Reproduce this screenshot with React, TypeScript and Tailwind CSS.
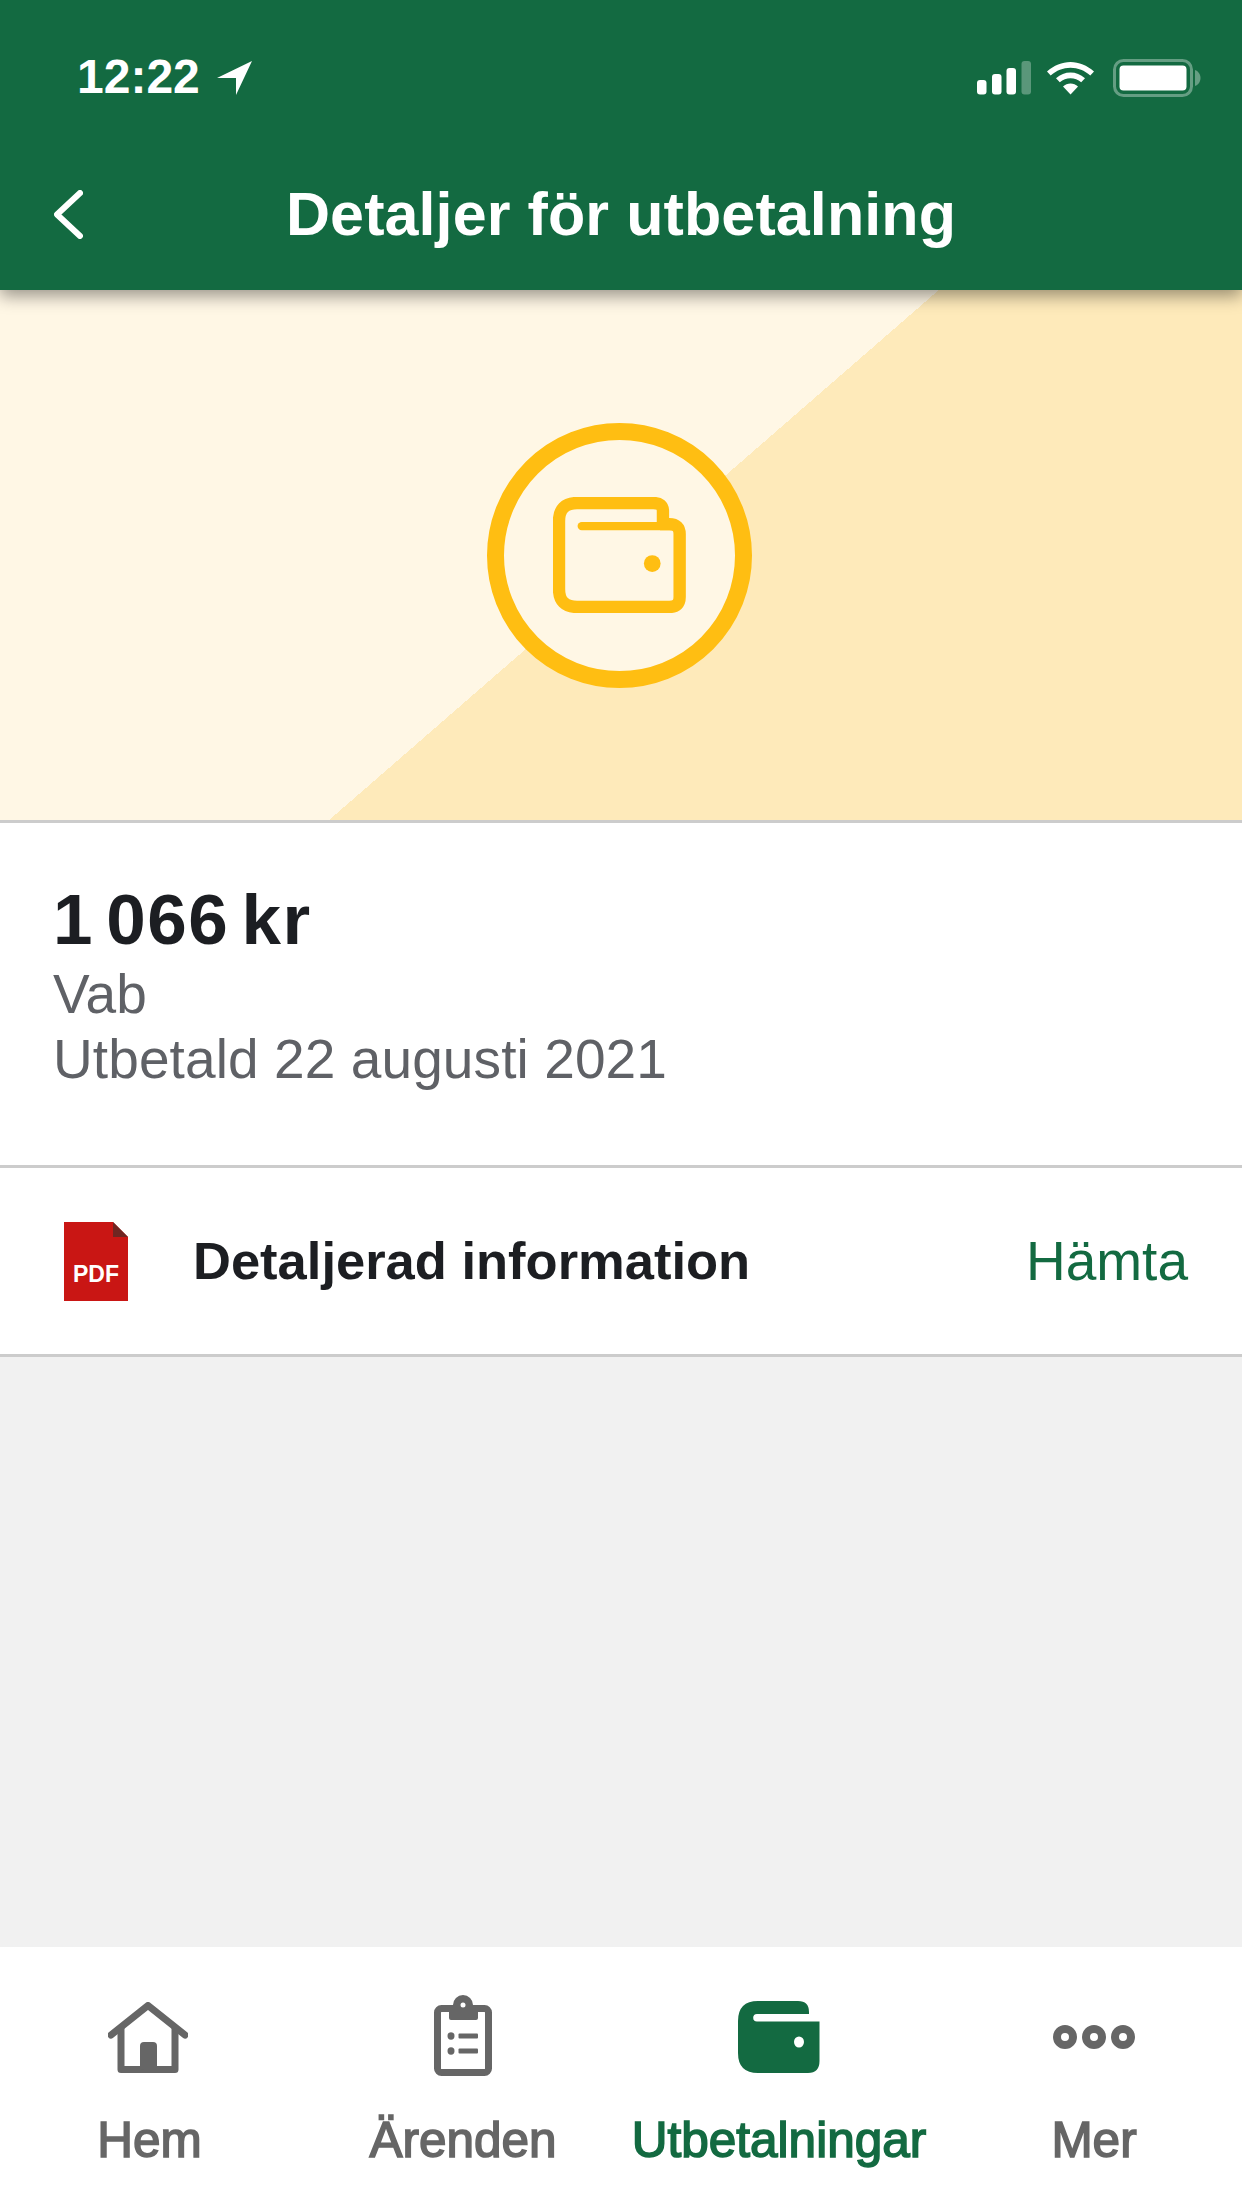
import React from 'react';

const tabs = [
  { label: 'Hem', active: false },
  { label: 'Ärenden', active: false },
  { label: 'Utbetalningar', active: true },
  { label: 'Mer', active: false },
];

function StatusIcons() {
  return (
    <div className="flex items-center">
      <svg width="54" height="34" viewBox="0 0 54 34" fill="#fff" className="mr-[16px]">
        <rect x="0" y="19" width="9.5" height="14.5" rx="3" />
        <rect x="15" y="13" width="9.5" height="20.5" rx="3" />
        <rect x="29.5" y="7" width="9.5" height="26.5" rx="3" />
        <rect x="44.5" y="0" width="9.5" height="33.5" rx="3" fillOpacity="0.3" />
      </svg>
      <svg width="47" height="34" viewBox="0 0 47 34" fill="#fff">
        <path d="M23.5 1C32 1 40 4.4 47 10.5L43.3 14.5C37.5 9.6 31 6.8 23.5 6.8S9.5 9.6 3.7 14.5L0 10.5C7 4.4 15 1 23.5 1Z" />
        <path d="M23.5 11.5C28.8 11.5 33.6 13.5 38 17.2L34.2 21.2C31 18.6 27.5 17.2 23.5 17.2S16 18.6 12.8 21.2L9 17.2C13.4 13.5 18.2 11.5 23.5 11.5Z" />
        <path d="M23.5 22.5C26.3 22.5 28.8 23.5 31 25.4L23.5 33.5L16 25.4C18.2 23.5 20.7 22.5 23.5 22.5Z" />
      </svg>
      <svg width="88" height="38" viewBox="0 0 88 38" className="ml-[19px]">
        <rect x="1.5" y="1.5" width="77" height="35" rx="9" fill="none" stroke="#fff" strokeOpacity="0.35" strokeWidth="3" />
        <rect x="6.5" y="6.5" width="67" height="25" rx="4" fill="#fff" />
        <path d="M82 11C85 12 87.5 15 87.5 19S85 26 82 27Z" fill="#fff" fillOpacity="0.35" />
      </svg>
    </div>
  );
}

function TabIcon({ name }: { name: string }) {
  if (name === 'Hem') {
    return (
      <svg width="80" height="71" viewBox="0 0 80 71" fill="none" stroke="#666" strokeWidth="7" strokeLinejoin="round" strokeLinecap="round" className="-ml-[3px]">
        <path d="M3 33L40 3.5L77 33" />
        <path d="M13 25V67.5H67V25" strokeLinecap="butt" />
        <rect x="32" y="40" width="17" height="28" rx="4" fill="#666" stroke="none" />
      </svg>
    );
  }
  if (name === 'Ärenden') {
    return (
      <svg width="58" height="81" viewBox="0 0 58 81" className="-mt-[4px]">
        <rect x="3.5" y="13.5" width="51" height="64" rx="4" fill="none" stroke="#666" strokeWidth="7" />
        <path d="M15 10H19A10 10 0 0 1 39 10H44V23Q44 25 42 25H17Q15 25 15 23Z" fill="#666" />
        <circle cx="29" cy="10" r="2.5" fill="#fff" />
        <ellipse cx="17" cy="41" rx="3.5" ry="3.7" fill="#666" />
        <rect x="24.5" y="38.5" width="19.5" height="5" rx="1" fill="#666" />
        <ellipse cx="17" cy="56" rx="3.5" ry="3.7" fill="#666" />
        <rect x="24.5" y="53.5" width="19.5" height="5" rx="1" fill="#666" />
      </svg>
    );
  }
  if (name === 'Utbetalningar') {
    return (
      <svg width="82" height="72" viewBox="0 0 82 72" fill="#136a41">
        <path d="M20 0H60Q71 0 71 11V13H19A3.8 3.8 0 0 0 19 20.6H81.5V60Q81.5 72 70 72H20Q0 72 0 52V20Q0 0 20 0Z" />
        <ellipse cx="61" cy="41" rx="5" ry="5.5" fill="#fff" />
      </svg>
    );
  }
  return (
    <svg width="82" height="24" viewBox="0 0 82 24" fill="none" stroke="#666" strokeWidth="8">
      <circle cx="12" cy="12" r="8" />
      <circle cx="41" cy="12" r="8" />
      <circle cx="70" cy="12" r="8" />
    </svg>
  );
}

export default function App() {
  return (
    <div className="w-[1242px] h-[2208px] flex flex-col overflow-hidden bg-[#f1f1f1] font-['Liberation_Sans',Arial,sans-serif]">
      <header className="relative z-10 h-[290px] shrink-0 bg-[#136a41] text-white shadow-[0_6px_16px_rgba(0,0,0,0.4)]">
        <div className="h-[156px] flex items-center justify-between pl-[77px] pr-[41px]">
          <div className="flex items-center -mt-[2px]">
            <span className="text-[48px] font-bold leading-none">12:22</span>
            <svg width="35" height="34" viewBox="0 0 35 34" fill="#fff" className="ml-[17px] mt-[2px]">
              <path d="M35 0L0 17H19V34Z" />
            </svg>
          </div>
          <StatusIcons />
        </div>
        <div className="grid grid-cols-[1fr_auto_1fr] items-center h-[114px] pl-[54px] pt-[2px]">
          <svg width="29" height="49" viewBox="0 0 29 49" fill="none" stroke="#fff" strokeWidth="6" strokeLinecap="round" strokeLinejoin="round">
            <path d="M26 3L3 24.5L26 46" />
          </svg>
          <h1 className="text-[61px] font-bold leading-none -ml-[54px] tracking-[0.1px]">Detaljer för utbetalning</h1>
        </div>
      </header>

      <section className="h-[533px] shrink-0 flex items-center justify-center pr-[3px] border-b-[3px] border-[#cccccc] bg-[linear-gradient(139deg,#fff7e5_50.7%,#feeaba_50.7%)]">
        <div className="w-[265px] h-[265px] rounded-full border-[17px] border-[#ffbe12] bg-[#fff7e5] flex items-center justify-center">
          <svg width="133" height="116" viewBox="340 293 398 347" fill="none" stroke="#ffbe12" strokeWidth="37">
            <path d="M669 374V335Q669 311 640 311H412Q358 311 358 365V568Q358 622 412 622H688Q719 622 719 592V404Q719 374 688 374H660" />
            <path d="M426 380H700" strokeWidth="25" strokeLinecap="round" />
            <circle cx="637" cy="492" r="25" fill="#ffbe12" stroke="none" />
          </svg>
        </div>
      </section>

      <section className="h-[345px] shrink-0 bg-white border-b-[3px] border-[#cccccc] pl-[53px] pt-[59px]">
        <div className="text-[71px] font-bold leading-[76px] text-[#1c1e22] tracking-[1.5px] [word-spacing:-9px]">1 066 kr</div>
        <div className="text-[55px] leading-[66px] text-[#5f6166] mt-[3px]">Vab</div>
        <div className="text-[55px] leading-[64px] text-[#5f6166] tracking-[0.1px]">Utbetald 22 augusti 2021</div>
      </section>

      <section className="h-[189px] shrink-0 bg-white border-b-[3px] border-[#cccccc] flex items-center pl-[64px] pr-[54px]">
        <svg width="64" height="79" viewBox="0 0 64 79" className="shrink-0">
          <path d="M0 0H49L64 15V79H0Z" fill="#c91614" />
          <path d="M49 0L64 15H49Z" fill="#6f2622" />
          <text x="32" y="60" textAnchor="middle" fontSize="23" fontWeight="700" fill="#fff" fontFamily="Liberation Sans, Arial, sans-serif">PDF</text>
        </svg>
        <span className="ml-[65px] text-[52.5px] font-bold leading-none text-[#1c1e22]">Detaljerad information</span>
        <span className="ml-auto text-[55px] leading-none text-[#136a41]">Hämta</span>
      </section>

      <div className="flex-1" />

      <nav className="h-[261px] shrink-0 bg-white grid grid-cols-[299px_328px_304px_326px] pt-[47px]">
        {tabs.map((tab) => (
          <div key={tab.label} className="flex flex-col items-center">
            <div className="h-[86px] flex items-center justify-center">
              <TabIcon name={tab.label} />
            </div>
            <span className={`mt-[33px] text-[49.5px] leading-[54px] whitespace-nowrap [-webkit-text-stroke:1.6px] ${tab.active ? 'text-[#136a41]' : 'text-[#666666]'}`}>
              {tab.label}
            </span>
          </div>
        ))}
      </nav>
    </div>
  );
}
